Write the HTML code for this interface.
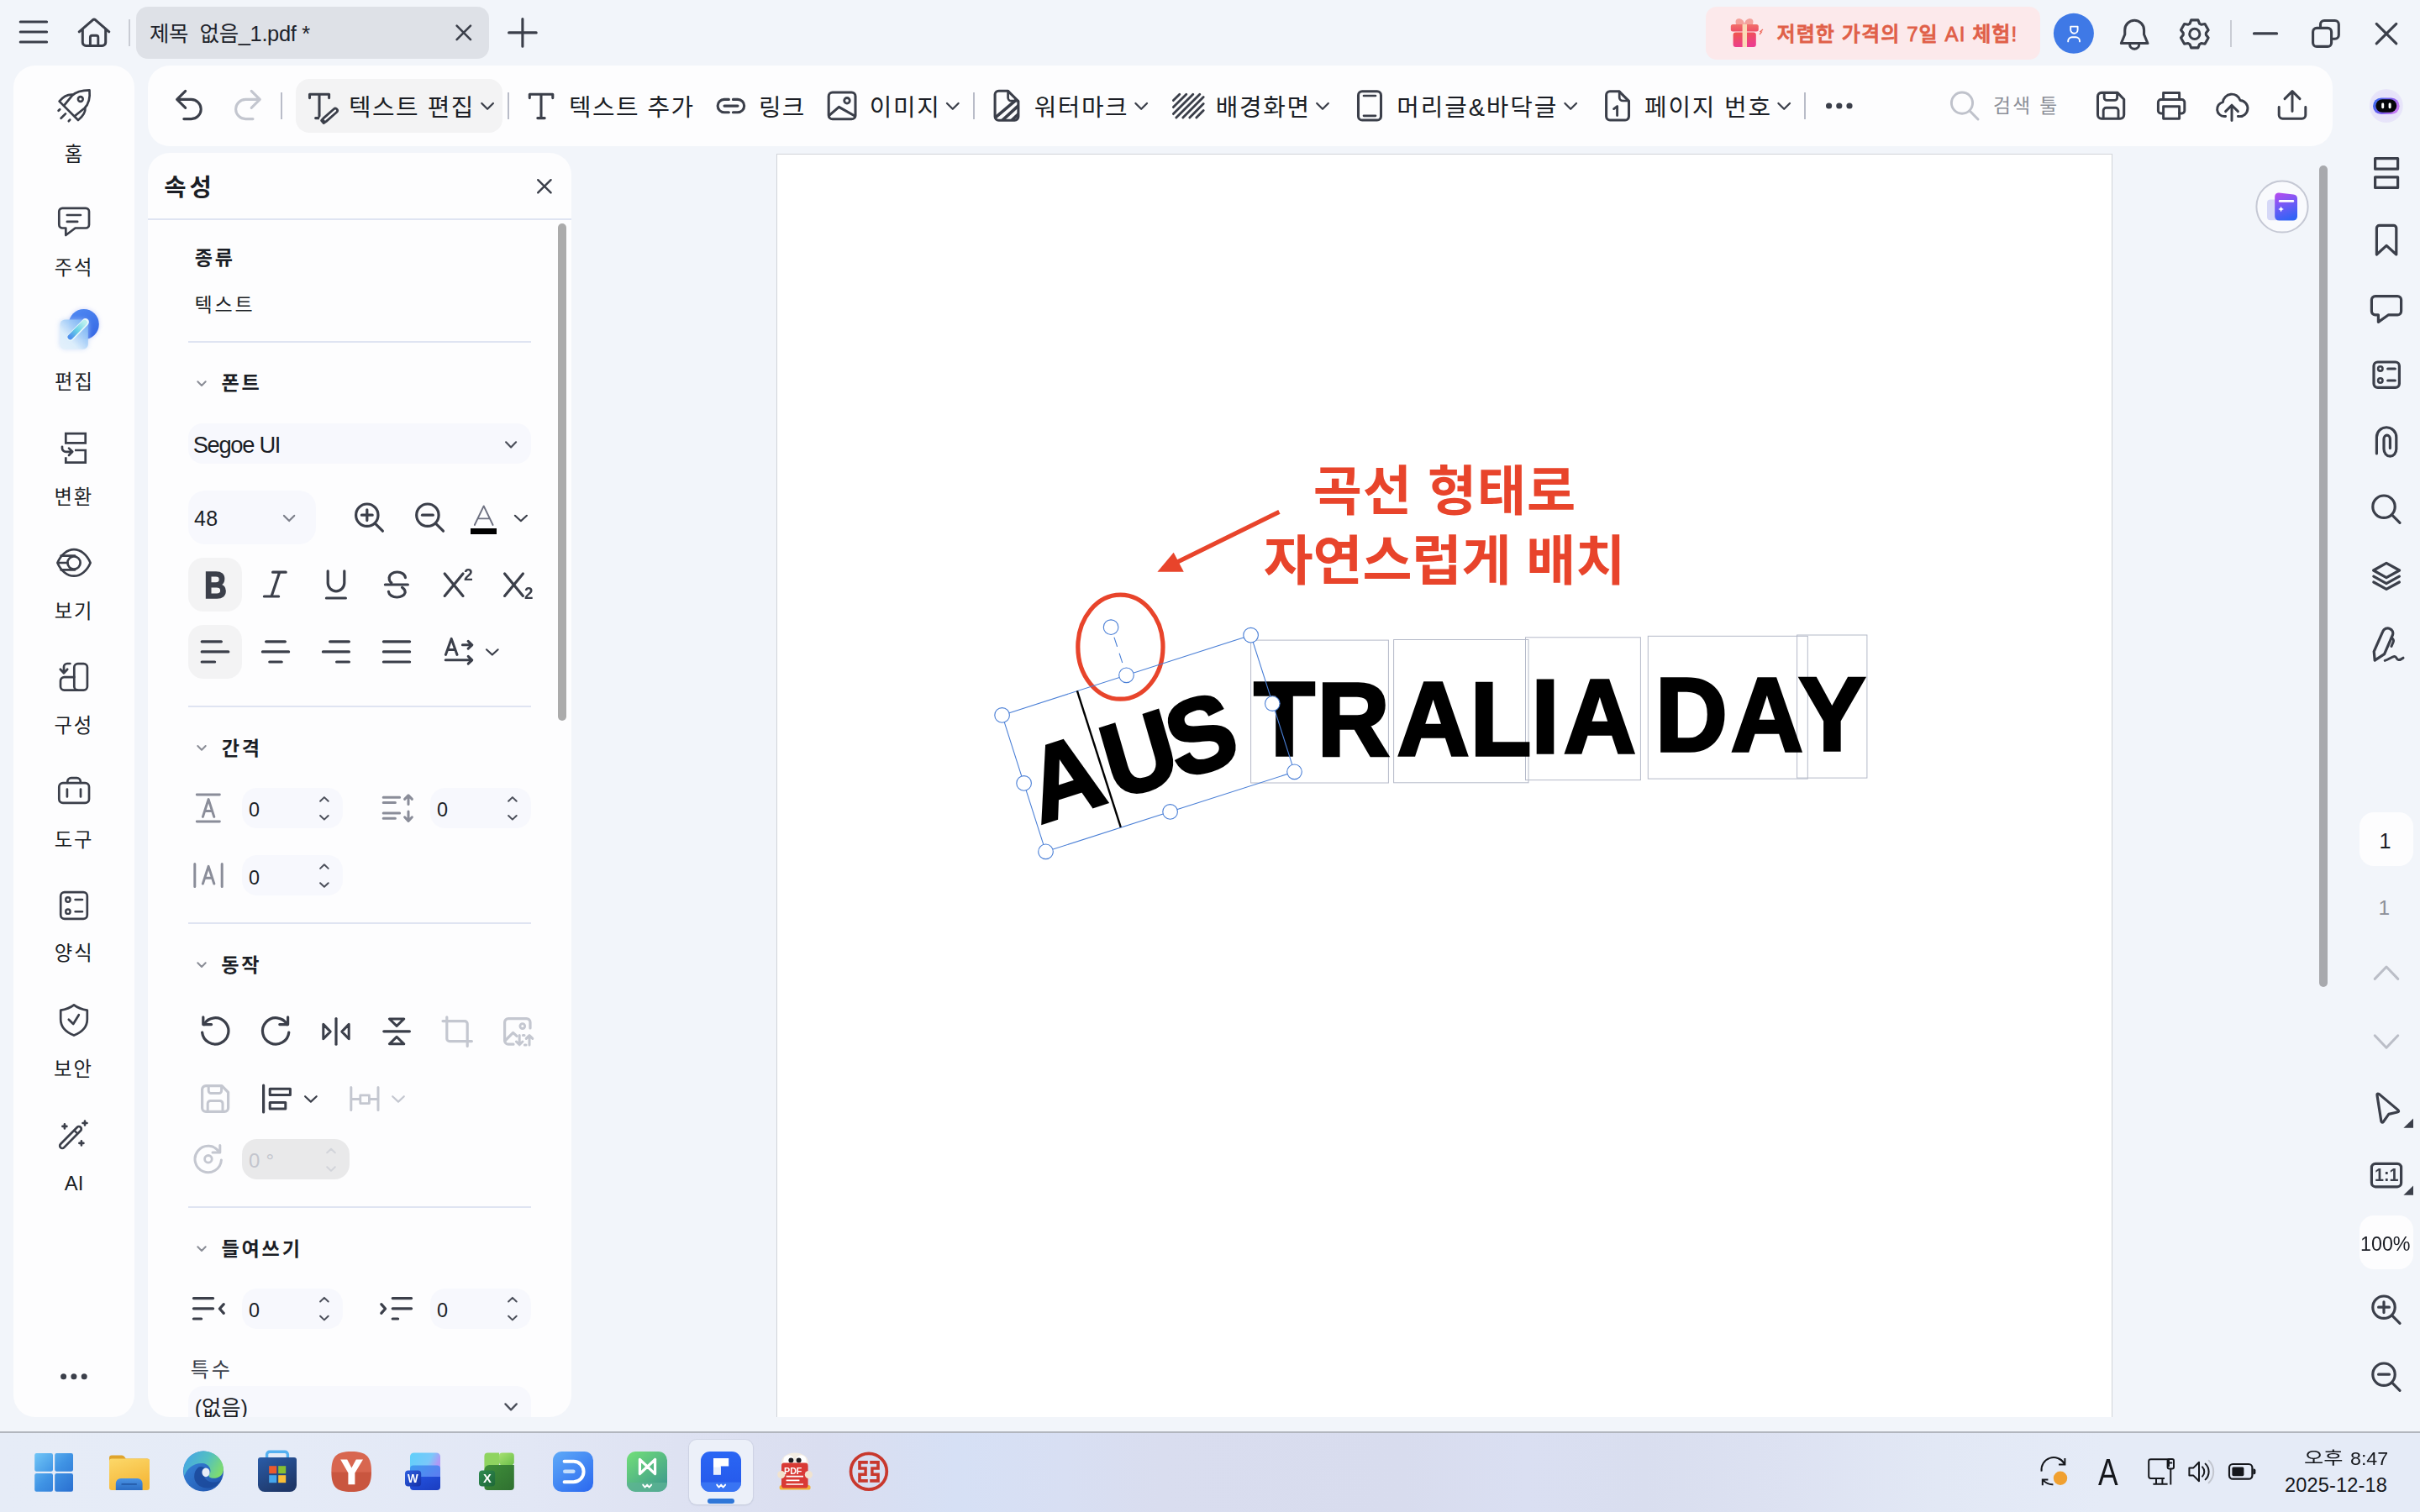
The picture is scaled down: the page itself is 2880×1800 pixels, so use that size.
<!DOCTYPE html>
<html lang="ko"><head><meta charset="utf-8"><title>제목 없음_1.pdf</title>
<style>
html,body{margin:0;padding:0;}
body{width:2880px;height:1800px;overflow:hidden;background:#f2f5fa;position:relative;font-family:"Liberation Sans","Noto Sans CJK KR",sans-serif;}
#ov,#ov2{position:absolute;left:0;top:0;width:2880px;height:1800px;pointer-events:none;}
</style></head><body>
<div style="position:absolute;left:924px;top:183px;width:1590px;height:1504px;background:#ffffff;border-radius:0px;box-sizing:border-box;border:1px solid #d1d4d9;border-bottom:none;"></div>
<div style="position:absolute;left:153.0px;top:23px;width:2.0px;height:32px;background:#c9ccd4;border-radius:0px;"></div>
<div style="position:absolute;left:162px;top:8px;width:420px;height:62px;background:#dee1e7;border-radius:14px;"></div>
<div style="position:absolute;left:2030px;top:8px;width:398px;height:63px;background:#fce9eb;border-radius:13px;"></div>
<div style="position:absolute;left:2654.0px;top:24px;width:2.0px;height:32px;background:#c9ccd4;border-radius:0px;"></div>
<div style="position:absolute;left:176px;top:78px;width:2600px;height:96px;background:#fdfdfe;border-radius:26px;"></div>
<div style="position:absolute;left:334.0px;top:110px;width:2.0px;height:32px;background:#b9bcc8;border-radius:0px;"></div>
<div style="position:absolute;left:352px;top:94px;width:246px;height:64px;background:#f3f3f4;border-radius:16px;"></div>
<div style="position:absolute;left:604.0px;top:110px;width:2.0px;height:32px;background:#b9bcc8;border-radius:0px;"></div>
<div style="position:absolute;left:1157.8px;top:110px;width:2.0px;height:32px;background:#b9bcc8;border-radius:0px;"></div>
<div style="position:absolute;left:2147.0px;top:110px;width:2.0px;height:32px;background:#b9bcc8;border-radius:0px;"></div>
<div style="position:absolute;left:16px;top:78px;width:144px;height:1609px;background:#fdfdfe;border-radius:26px;"></div>
<div style="position:absolute;left:176px;top:182px;width:504px;height:1505px;background:#fdfdfe;border-radius:26px;"></div>
<div style="position:absolute;left:176px;top:260px;width:504px;height:2px;background:#dfe4f2;border-radius:0px;"></div>
<div style="position:absolute;left:664px;top:266px;width:10.399999999999977px;height:591.6px;background:#ababab;border-radius:5.2px;"></div>
<div style="position:absolute;left:224px;top:405.8px;width:408px;height:2.0px;background:#dfe4f2;border-radius:0px;"></div>
<div style="position:absolute;left:224px;top:504px;width:408px;height:48px;background:#f7f8fd;border-radius:17px;"></div>
<div style="position:absolute;left:224px;top:584.2px;width:152px;height:63.799999999999955px;background:#f7f8fd;border-radius:20px;"></div>
<div style="position:absolute;left:560.4px;top:629px;width:30.200000000000045px;height:7.399999999999977px;background:#000;border-radius:0px;"></div>
<div style="position:absolute;left:224px;top:664.2px;width:64px;height:63.799999999999955px;background:#f3f3f4;border-radius:18px;"></div>
<div style="position:absolute;left:224px;top:744px;width:64px;height:63.60000000000002px;background:#f3f3f4;border-radius:18px;"></div>
<div style="position:absolute;left:224px;top:840px;width:408px;height:2px;background:#dfe4f2;border-radius:0px;"></div>
<div style="position:absolute;left:288px;top:938.2px;width:120px;height:47.799999999999955px;background:#f7f8fd;border-radius:18px;"></div>
<div style="position:absolute;left:512px;top:938.2px;width:120px;height:47.799999999999955px;background:#f7f8fd;border-radius:18px;"></div>
<div style="position:absolute;left:288px;top:1018.4px;width:120px;height:47.80000000000007px;background:#f7f8fd;border-radius:18px;"></div>
<div style="position:absolute;left:224px;top:1098.2px;width:408px;height:2.0px;background:#dfe4f2;border-radius:0px;"></div>
<div style="position:absolute;left:288px;top:1356.4px;width:128px;height:47.399999999999864px;background:#e9e9ea;border-radius:18px;"></div>
<div style="position:absolute;left:224px;top:1435.8px;width:408px;height:2.0px;background:#dfe4f2;border-radius:0px;"></div>
<div style="position:absolute;left:288px;top:1534.2px;width:120px;height:47.399999999999864px;background:#f7f8fd;border-radius:18px;"></div>
<div style="position:absolute;left:512px;top:1534.2px;width:120px;height:47.399999999999864px;background:#f7f8fd;border-radius:18px;"></div>
<div style="position:absolute;left:176px;top:1640px;width:504px;height:47px;overflow:hidden;border-radius:0 0 26px 26px"><div style="position:absolute;left:48px;top:10.2px;width:408px;height:60px;background:#f7f8fd;border-radius:18px"></div></div>
<div style="position:absolute;left:2760px;top:197px;width:10px;height:978.4000000000001px;background:#a8a9ad;border-radius:5px;"></div>
<div style="position:absolute;left:2808px;top:967px;width:64px;height:64px;background:#fdfdfe;border-radius:17px;"></div>
<div style="position:absolute;left:2808px;top:1447px;width:64px;height:64px;background:#fdfdfe;border-radius:17px;"></div>
<div style="position:absolute;left:0;top:1704px;width:2880px;height:96px;background:linear-gradient(90deg,#e6ecf7 0%,#e5ebf7 12%,#e2e7f5 22%,#dee2f2 28%,#dadef0 34%,#d6e0f5 39.5%,#d8dff3 44%,#d9ddef 48%,#d8dcee 58%,#dadff2 63%,#d9deef 68%,#dde2f2 74%,#e2e8f5 80%,#e5ebf7 87%,#e5ebf7 100%);border-top:2px solid #b2b6be;box-sizing:border-box"></div>
<div style="position:absolute;left:820px;top:1714px;width:76px;height:76.59999999999991px;background:#ecf0f9;border-radius:9px;box-shadow:0 0 0 1px rgba(200,205,222,0.55), 0 1px 2px rgba(120,130,160,0.25);"></div>
<div style="position:absolute;left:842.2px;top:1784px;width:31.799999999999955px;height:5.7999999999999545px;background:#2f77d8;border-radius:3px;"></div>
<svg id="ov" width="2880" height="1800" viewBox="0 0 2880 1800">
<rect x="1488.6" y="762.1" width="163.8" height="169.9" fill="none" stroke="#b4b9c8" stroke-width="1"/>
<rect x="1658.6" y="761.5" width="160.4" height="170.3" fill="none" stroke="#b4b9c8" stroke-width="1"/>
<rect x="1815.5" y="758.8" width="136.9" height="169.8" fill="none" stroke="#b4b9c8" stroke-width="1"/>
<rect x="1961.3" y="757.3" width="190.0" height="169.8" fill="none" stroke="#b4b9c8" stroke-width="1"/>
<rect x="2138.6" y="756" width="83.3" height="170.1" fill="none" stroke="#b4b9c8" stroke-width="1"/>
<path d="M1522.4,609.3 L1398,670.6" stroke="#e8442b" stroke-width="5.2" fill="none" stroke-linecap="butt" stroke-linejoin="round" />
<path d="M1377.4,680.8 L1396.7,657.7 L1408.8,680.8 Z" fill="#e8442b"/>
<text transform="scale(0.95,1)" x="1303.32 1396.59 1477.09 1570.74 1650.21 1750.32 1841.84 1918.37 1958.89 2047.92 2073.79 2168.42 2253.32" y="980.45 952.37 928.19 899.00 900.00 898.60 898.60 895.90 895.90 895.90 894.40 894.40 893.10" rotate="-16.99 -16.99 -16.99 0.00 0.00 0.00 0.00 0.00 0.00 0.00 0.00 0.00 0.00" font-family="Liberation Sans, sans-serif" font-weight="700" font-size="125.0" fill="#000" stroke="#000" stroke-width="3.7" stroke-linejoin="miter" stroke-miterlimit="2.5" xml:space="preserve">AUSTRALIA DAY</text>
<path d="M24.2,26 H55.6" stroke="#3b3f4a" stroke-width="3.05" fill="none" stroke-linecap="round" stroke-linejoin="round" />
<path d="M24.2,38 H55.6" stroke="#3b3f4a" stroke-width="3.05" fill="none" stroke-linecap="round" stroke-linejoin="round" />
<path d="M24.2,50 H55.6" stroke="#3b3f4a" stroke-width="3.05" fill="none" stroke-linecap="round" stroke-linejoin="round" />
<path d="M94.2,37.8 L110.6,23.6 Q112,22.6 113.4,23.6 L129.8,37.8" stroke="#3b3f4a" stroke-width="3.05" fill="none" stroke-linecap="round" stroke-linejoin="round" />
<path d="M98.3,35.4 V50.4 a4,4 0 0 0 4,4 H121.7 a4,4 0 0 0 4,-4 V35.4" stroke="#3b3f4a" stroke-width="3.05" fill="none" stroke-linecap="round" stroke-linejoin="round" />
<path d="M107.4,54 V44.4 a2.2,2.2 0 0 1 2.2,-2.2 H114.6 a2.2,2.2 0 0 1 2.2,2.2 V54" stroke="#3b3f4a" stroke-width="2.9" fill="none" stroke-linecap="round" stroke-linejoin="round" />
<path d="M543.6,30.7 L560,47.1 M560,30.7 L543.6,47.1" stroke="#3b3f4a" stroke-width="2.6" fill="none" stroke-linecap="round" stroke-linejoin="round" />
<path d="M605.6,38.9 H638.2 M621.9,22.6 V55.2" stroke="#3b3f4a" stroke-width="3.1" fill="none" stroke-linecap="round" stroke-linejoin="round" />
<defs><linearGradient id="gft" x1="0" y1="0" x2="0.3" y2="1"><stop offset="0" stop-color="#f0564a"/><stop offset="1" stop-color="#ec3d8e"/></linearGradient>
    <linearGradient id="gft2" x1="0" y1="0" x2="0" y2="1"><stop offset="0" stop-color="#f2706a"/><stop offset="1" stop-color="#ee4f66"/></linearGradient></defs>
    <path d="M2066,29 q-2,-7 4,-7 q6,1 6,8 q0,-7 6,-8 q6,0 4,7 z" fill="#f3a29c"/>
    <rect x="2059.8" y="29" width="33" height="8.5" rx="2.5" fill="url(#gft2)"/>
    <rect x="2062.6" y="38.6" width="27.2" height="17.4" rx="3" fill="url(#gft)"/>
    <rect x="2073.6" y="29" width="5.4" height="27" fill="#fbd9b6"/>
    <path d="M2094,41 l2.5,-3 l-1.5,-0.5 l3,-2.5" stroke="#ee6a5c" stroke-width="1.2" fill="none"/>
<circle cx="2467.9" cy="39.8" r="24" fill="#3f79e6"/>
<path d="M2464.2,31.6 H2472.6 V35.4 a4.3,4.3 0 0 1 -4.3,4.3 a4.1,4.1 0 0 1 -4.1,-4.3 Z" stroke="#fff" stroke-width="1.9" fill="none" stroke-linejoin="round"/>
<path d="M2461.2,49.4 V48.8 a4.6,4.6 0 0 1 4.6,-4.6 H2470.4 a4.6,4.6 0 0 1 4.6,4.6 V49.4" stroke="#fff" stroke-width="1.9" fill="none" stroke-linecap="round"/>
<path d="M2524.4,51.5 L2528.75,41 V35.7 a11.4,11.4 0 0 1 22.8,0 V41 L2555.9,51.5 Z" stroke="#3b3f4a" stroke-width="3.1" fill="none" stroke-linecap="round" stroke-linejoin="round" />
<path d="M2534.6,53 a5.55,5.2 0 0 0 11.1,0" stroke="#3b3f4a" stroke-width="3.0" fill="none" stroke-linecap="round" stroke-linejoin="round" />
<path d="M2606.05,28.07 L2607.69,23.90 L2615.91,23.90 L2617.55,28.07 L2619.60,29.26 L2624.03,28.59 L2628.14,35.71 L2625.35,39.21 L2625.35,41.59 L2628.14,45.09 L2624.03,52.21 L2619.60,51.54 L2617.55,52.73 L2615.91,56.90 L2607.69,56.90 L2606.05,52.73 L2604.00,51.54 L2599.57,52.21 L2595.46,45.09 L2598.25,41.59 L2598.25,39.21 L2595.46,35.71 L2599.57,28.59 L2604.00,29.26 Z" stroke="#3b3f4a" stroke-width="3.1" fill="none" stroke-linecap="round" stroke-linejoin="round" />
<circle cx="2611.8" cy="40.4" r="6.1" stroke="#3b3f4a" stroke-width="3" fill="none"/>
<path d="M2682.4,39.9 H2709.6" stroke="#3b3f4a" stroke-width="3.1" fill="none" stroke-linecap="round" stroke-linejoin="round" />
<path d="M2761.5,31.4 V29 a4.5,4.5 0 0 1 4.5,-4.5 H2778.8 a4.5,4.5 0 0 1 4.5,4.5 V41.8 a4.5,4.5 0 0 1 -4.5,4.5 H2776.6" stroke="#3b3f4a" stroke-width="3.1" fill="none" stroke-linecap="round" stroke-linejoin="round" />
<rect x="2752.6" y="33.4" width="22" height="22" rx="4.5" stroke="#3b3f4a" stroke-width="3.1" fill="none"/>
<path d="M2828.2,28.4 L2851.8,51.8 M2851.8,28.4 L2828.2,51.8" stroke="#3b3f4a" stroke-width="3.1" fill="none" stroke-linecap="round" stroke-linejoin="round" />
<path d="M220.7,108.4 L210.6,118.4 L220.7,128.4 M211.4,118.4 H227.6 a11.6,11.6 0 0 1 0,23.2 H218.8" stroke="#3b3f4a" stroke-width="3.06" fill="none" stroke-linecap="round" stroke-linejoin="round" />
<path d="M299.2,108.4 L309.3,118.4 L299.2,128.4 M308.5,118.4 H292.2 a11.6,11.6 0 0 0 0,23.2 H301" stroke="#c3c6cf" stroke-width="3.06" fill="none" stroke-linecap="round" stroke-linejoin="round" />
<path d="M368.5,116.6 V112.2 H391.6 V116.6 M380,112.2 V140.4 M375.6,140.6 H381" stroke="#3b3f4a" stroke-width="3.06" fill="none" stroke-linecap="round" stroke-linejoin="round" />
<g transform="translate(392.6,137.3) rotate(-41.5)"><path d="M-9.6,-2.5 H8.6 a2.5,2.5 0 0 1 0,5 H-9.6 L-12.4,0 Z" fill="#f3f3f4" stroke="#f3f3f4" stroke-width="7.6" stroke-linejoin="round"/><path d="M-8.2,-2.5 H8.6 a2.5,2.5 0 0 1 0,5 H-8.2 L-11.6,2 V-2 Z" fill="#fdfdfe" stroke="#3b3f4a" stroke-width="2.8" stroke-linejoin="round"/><path d="M-11.6,-2 L-8.6,-2.5 V2.5 L-11.6,2 Z" fill="#3b3f4a"/></g>
<path d="M573.3000000000001,123.0 L580.1,129.8 L586.9,123.0" stroke="#3b3f4a" stroke-width="2.3" fill="none" stroke-linecap="round" stroke-linejoin="round" />
<path d="M630.3,116.6 V112.2 H657.8 V116.6 M644,112.2 V140.4 M639.8,140.6 H648.2" stroke="#3b3f4a" stroke-width="3.06" fill="none" stroke-linecap="round" stroke-linejoin="round" />
<path d="M867.4,118.4 H861.8 a7.7,7.7 0 0 0 0,15.4 H867.4 M872.4,118.4 H878 a7.7,7.7 0 0 1 0,15.4 H872.4 M862,126.1 H878" stroke="#3b3f4a" stroke-width="3.06" fill="none" stroke-linecap="round" stroke-linejoin="round" />
<rect x="986.2" y="110" width="31.8" height="31.8" rx="4.6" stroke="#3b3f4a" stroke-width="3.05" fill="none"/>
<circle cx="1008" cy="119.8" r="3.3" stroke="#3b3f4a" stroke-width="2.8" fill="none"/>
<path d="M986.6,137.6 L998.4,127.4 L1017.6,138.2" stroke="#3b3f4a" stroke-width="3.06" fill="none" stroke-linecap="round" stroke-linejoin="round" />
<path d="M1127.0,123.0 L1133.8,129.8 L1140.6,123.0" stroke="#3b3f4a" stroke-width="2.3" fill="none" stroke-linecap="round" stroke-linejoin="round" />
<clipPath id="wmc"><path d="M1184.1,112.6 a4.4,4.4 0 0 1 4.4,-4.4 H1199.4 L1211.9,120.6 V138.8 a4.4,4.4 0 0 1 -4.4,4.4 H1188.5 a4.4,4.4 0 0 1 -4.4,-4.4 Z"/></clipPath>
    <g clip-path="url(#wmc)" stroke="#3b3f4a" stroke-width="3.7" fill="none" stroke-linecap="butt">
      <path d="M1181.4,142.6 L1209.4,118.8 M1188.6,147.2 L1214.5,123.4 M1199.4,147.6 L1214.5,133.4"/>
    </g>
<path d="M1184.1,112.6 a4.4,4.4 0 0 1 4.4,-4.4 H1199.4 L1211.9,120.6 V138.8 a4.4,4.4 0 0 1 -4.4,4.4 H1188.5 a4.4,4.4 0 0 1 -4.4,-4.4 Z" stroke="#3b3f4a" stroke-width="3.06" fill="none" stroke-linecap="round" stroke-linejoin="round" />
<path d="M1199.6,108.6 V116.2 a4,4 0 0 0 4,4 H1211.4" stroke="#3b3f4a" stroke-width="2.7" fill="none" stroke-linecap="round" stroke-linejoin="round" />
<path d="M1351.4,123.0 L1358.2,129.8 L1365.0,123.0" stroke="#3b3f4a" stroke-width="2.3" fill="none" stroke-linecap="round" stroke-linejoin="round" />
<path d="M1396.4,119.6 L1403.8,112.2 M1396.4,127.6 L1411.8,112.2 M1396.4,135.6 L1419.8,112.2 M1399.8,140.0 L1427.8,112.2 M1407.8,140.0 L1432.2,115.6 M1415.8,140.0 L1432.2,123.6 M1423.8,140.0 L1432.2,131.6" stroke="#3b3f4a" stroke-width="2.88" fill="none" stroke-linecap="round" stroke-linejoin="round" />
<path d="M1567.2,123.0 L1574,129.8 L1580.8,123.0" stroke="#3b3f4a" stroke-width="2.3" fill="none" stroke-linecap="round" stroke-linejoin="round" />
<rect x="1616.5" y="108.8" width="27" height="34.2" rx="4.6" stroke="#3b3f4a" stroke-width="3.05" fill="none"/>
<path d="M1623,114 H1637 M1623,137.8 H1637" stroke="#3b3f4a" stroke-width="2.7" fill="none" stroke-linecap="round" stroke-linejoin="round" />
<path d="M1862.4,123.0 L1869.2,129.8 L1876.0,123.0" stroke="#3b3f4a" stroke-width="2.3" fill="none" stroke-linecap="round" stroke-linejoin="round" />
<path d="M1911.6,113.2 a4.4,4.4 0 0 1 4.4,-4.4 H1927 L1938.5,120.4 V138.6 a4.4,4.4 0 0 1 -4.4,4.4 H1916 a4.4,4.4 0 0 1 -4.4,-4.4 Z" stroke="#3b3f4a" stroke-width="3.06" fill="none" stroke-linecap="round" stroke-linejoin="round" />
<path d="M1927.2,109.2 V116 a4,4 0 0 0 4,4 H1938" stroke="#3b3f4a" stroke-width="2.7" fill="none" stroke-linecap="round" stroke-linejoin="round" />
<path d="M1920.6,129.6 L1924.6,126.6 V137.6" stroke="#3b3f4a" stroke-width="2.88" fill="none" stroke-linecap="round" stroke-linejoin="round" />
<path d="M2116.3999999999996,123.0 L2123.2,129.8 L2130.0,123.0" stroke="#3b3f4a" stroke-width="2.3" fill="none" stroke-linecap="round" stroke-linejoin="round" />
<circle cx="2176.6" cy="126" r="3.6" fill="#3b3f4a"/>
<circle cx="2188.8" cy="126" r="3.6" fill="#3b3f4a"/>
<circle cx="2201" cy="126" r="3.6" fill="#3b3f4a"/>
<circle cx="2335" cy="122.6" r="12.6" stroke="#bfc2cb" stroke-width="2.9" fill="none"/>
<path d="M2344.4,132.2 L2354,142" stroke="#bfc2cb" stroke-width="3.06" fill="none" stroke-linecap="round" stroke-linejoin="round" />
<path d="M2496.5,114.8 a4.4,4.4 0 0 1 4.4,-4.4 H2520 L2527.7,118.2 V136.8 a4.4,4.4 0 0 1 -4.4,4.4 H2500.9 a4.4,4.4 0 0 1 -4.4,-4.4 Z" stroke="#3b3f4a" stroke-width="3.06" fill="none" stroke-linecap="round" stroke-linejoin="round" />
<path d="M2504.2,111 V116.4 a3,3 0 0 0 3,3 H2516.6 a3,3 0 0 0 3,-3 V111" stroke="#3b3f4a" stroke-width="2.88" fill="none" stroke-linecap="round" stroke-linejoin="round" />
<path d="M2503.2,140.8 V131.6 a3.4,3.4 0 0 1 3.4,-3.4 H2517.6 a3.4,3.4 0 0 1 3.4,3.4 V140.8" stroke="#3b3f4a" stroke-width="2.88" fill="none" stroke-linecap="round" stroke-linejoin="round" />
<path d="M2574.6,118.6 V110.4 H2593.6 V118.6" stroke="#3b3f4a" stroke-width="2.97" fill="none" stroke-linecap="round" stroke-linejoin="round" />
<path d="M2574.6,135 H2571.6 a3.2,3.2 0 0 1 -3.2,-3.2 V121.8 a3.2,3.2 0 0 1 3.2,-3.2 H2596.6 a3.2,3.2 0 0 1 3.2,3.2 V131.8 a3.2,3.2 0 0 1 -3.2,3.2 H2593.6" stroke="#3b3f4a" stroke-width="2.97" fill="none" stroke-linecap="round" stroke-linejoin="round" />
<path d="M2574.6,126.8 H2593.6 V141.2 H2574.6 Z" stroke="#3b3f4a" stroke-width="2.97" fill="none" stroke-linecap="round" stroke-linejoin="round" />
<path d="M2648.6,138.6 H2647 a8.6,8.6 0 0 1 -1.6,-17 a10.6,10.6 0 0 1 20.6,-2.2 a9.6,9.6 0 0 1 -1.4,19.2 H2663.4" stroke="#3b3f4a" stroke-width="2.97" fill="none" stroke-linecap="round" stroke-linejoin="round" />
<path d="M2656,143.6 V126.6 M2648.6,132.6 L2656,125.2 L2663.4,132.6" stroke="#3b3f4a" stroke-width="2.97" fill="none" stroke-linecap="round" stroke-linejoin="round" />
<path d="M2712.2,127.4 V137 a4.2,4.2 0 0 0 4.2,4.2 H2739.6 a4.2,4.2 0 0 0 4.2,-4.2 V127.4" stroke="#3b3f4a" stroke-width="2.97" fill="none" stroke-linecap="round" stroke-linejoin="round" />
<path d="M2728,132.4 V109.4 M2719,117.6 L2728,108.6 L2737,117.6" stroke="#3b3f4a" stroke-width="2.97" fill="none" stroke-linecap="round" stroke-linejoin="round" />
<path d="M76.4,125.4 L85.8,113.8 C90,109.6 97,107.5 106.5,107.4 C107.4,116.6 105.6,124 100.6,128.8 L89.4,137.8" stroke="#3b3f4a" stroke-width="2.7" fill="none" stroke-linecap="round" stroke-linejoin="round" />
<path d="M86.4,112.7 C80,112.2 75,115.4 70.6,120.6 L93,143 C98.4,138.6 102,134.4 101.4,128.4" stroke="#3b3f4a" stroke-width="2.7" fill="none" stroke-linecap="round" stroke-linejoin="round" />
<circle cx="95.8" cy="118" r="2.9" stroke="#3b3f4a" stroke-width="2.6" fill="none"/>
<path d="M69.6,131.8 L71.2,130.2 M72.6,140.8 L78,135.4 M81.8,144.2 L83.2,142.6" stroke="#3b3f4a" stroke-width="2.7" fill="none" stroke-linecap="round" stroke-linejoin="round" />
<path d="M78.3,280 V271.5 H74.2 a3.9,3.9 0 0 1 -3.9,-3.9 V251.8 a3.9,3.9 0 0 1 3.9,-3.9 H102.1 a3.9,3.9 0 0 1 3.9,3.9 V267.6 a3.9,3.9 0 0 1 -3.9,3.9 H89.6 Z" stroke="#3b3f4a" stroke-width="2.7" fill="none" stroke-linecap="round" stroke-linejoin="round" />
<path d="M79.8,256 H96 M79.8,263.9 H92.2" stroke="#3b3f4a" stroke-width="2.6" fill="none" stroke-linecap="round" stroke-linejoin="round" />
<defs>
    <linearGradient id="edc" x1="0.2" y1="0" x2="0.8" y2="1"><stop offset="0" stop-color="#4f88f2"/><stop offset="1" stop-color="#3668e4"/></linearGradient>
    <linearGradient id="edg" x1="1" y1="0" x2="0.1" y2="0.9"><stop offset="0" stop-color="#6aa9f4" stop-opacity="0.96"/><stop offset="0.45" stop-color="#a9d0f8" stop-opacity="0.97"/><stop offset="0.75" stop-color="#dcedfb" stop-opacity="0.98"/><stop offset="1" stop-color="#e2f0fb" stop-opacity="0.98"/></linearGradient>
    <linearGradient id="edp" x1="0" y1="1" x2="1" y2="0"><stop offset="0" stop-color="#4f92ee"/><stop offset="0.45" stop-color="#66cfe6"/><stop offset="1" stop-color="#b9f0ee"/></linearGradient>
    <filter id="edb" x="-40%" y="-40%" width="180%" height="180%"><feGaussianBlur stdDeviation="2.4"/></filter>
    <filter id="edb2" x="-40%" y="-40%" width="180%" height="180%"><feGaussianBlur stdDeviation="0.7"/></filter>
    </defs>
    <circle cx="99.8" cy="386" r="18.6" fill="#8f9cf4" opacity="0.35" filter="url(#edb)"/>
    <circle cx="99.8" cy="386" r="18" fill="url(#edc)"/>
    <rect x="70" y="379.4" width="36" height="37" rx="7" fill="#b9d2f6" opacity="0.5" filter="url(#edb)"/>
    <rect x="71.4" y="380.4" width="33.4" height="35.4" rx="6" fill="url(#edg)" filter="url(#edb2)"/>
    <path d="M84,401.6 L101.6,383.4" stroke="#eaf8fc" stroke-width="8.6" stroke-linecap="round" fill="none" filter="url(#edb2)"/>
    <path d="M83.6,401.2 L100.6,384" stroke="url(#edp)" stroke-width="6.2" stroke-linecap="round" fill="none" filter="url(#edb2)"/>
<path d="M78.3,516.1 H101.7 V527.4 H78.3 Z" stroke="#3b3f4a" stroke-width="2.7" fill="none" stroke-linecap="round" stroke-linejoin="miter" />
<path d="M90.4,536 H101.7 V550.7 H78.3 V545.6" stroke="#3b3f4a" stroke-width="2.7" fill="none" stroke-linecap="square" stroke-linejoin="miter" />
<path d="M74,531.8 V533.4 a4.4,4.4 0 0 0 4.4,4.4 H85.6 M82,533.6 L86.2,537.8 L82,542" stroke="#3b3f4a" stroke-width="2.7" fill="none" stroke-linecap="round" stroke-linejoin="round" />
<path d="M68.4,670 C72.4,660.4 80,654.1 88,654.1 C96,654.1 103.6,660.4 107.6,670 C103.6,679.6 96,685.7 88,685.7 C80,685.7 72.4,679.6 68.4,670 Z" stroke="#3b3f4a" stroke-width="2.7" fill="none" stroke-linecap="round" stroke-linejoin="round" />
<circle cx="88" cy="670" r="7.6" stroke="#3b3f4a" stroke-width="2.7" fill="none"/>
<path d="M72.6,661.6 H89 M69.4,670 H80.4 M72.6,678.4 H89" stroke="#3b3f4a" stroke-width="2.7" fill="none" stroke-linecap="round" stroke-linejoin="round" />
<rect x="88.3" y="790.1" width="15.6" height="31.5" rx="4.4" stroke="#3b3f4a" stroke-width="2.7" fill="none"/>
<path d="M88.3,806.1 H76.4 a4.4,4.4 0 0 0 -4.4,4.4 V817.2 a4.4,4.4 0 0 0 4.4,4.4 H92" stroke="#3b3f4a" stroke-width="2.7" fill="none" stroke-linecap="round" stroke-linejoin="round" />
<path d="M83.4,790 H80 a4,4 0 0 0 -4,4 V800.8 M71.8,796.8 L76,801.2 L80.2,796.8" stroke="#3b3f4a" stroke-width="2.7" fill="none" stroke-linecap="round" stroke-linejoin="round" />
<rect x="70.3" y="932.2" width="35.7" height="23.6" rx="4.6" stroke="#3b3f4a" stroke-width="2.7" fill="none"/>
<path d="M80.3,932 V930.6 a4.4,4.4 0 0 1 4.4,-4.4 H91.4 a4.4,4.4 0 0 1 4.4,4.4 V932" stroke="#3b3f4a" stroke-width="2.7" fill="none" stroke-linecap="round" stroke-linejoin="round" />
<path d="M79.9,939.6 V948.4 M96,939.6 V948.4" stroke="#3b3f4a" stroke-width="2.7" fill="none" stroke-linecap="round" stroke-linejoin="round" />
<rect x="72.2" y="1062.2" width="31.6" height="31.6" rx="4.6" stroke="#3b3f4a" stroke-width="2.7" fill="none"/>
<circle cx="80.9" cy="1071" r="2.7" stroke="#3b3f4a" stroke-width="2.4" fill="none"/><circle cx="80.9" cy="1085.2" r="2.7" stroke="#3b3f4a" stroke-width="2.4" fill="none"/>
<path d="M89.6,1071 H98 M89.6,1085.2 H98" stroke="#3b3f4a" stroke-width="2.6" fill="none" stroke-linecap="round" stroke-linejoin="round" />
<path d="M88,1196.4 C92.4,1199.8 97.6,1201.8 103.8,1202.6 V1213.6 C103.8,1222.6 97.6,1228.8 88,1232.6 C78.4,1228.8 72.2,1222.6 72.2,1213.6 V1202.6 C78.4,1201.8 83.6,1199.8 88,1196.4 Z" stroke="#3b3f4a" stroke-width="2.7" fill="none" stroke-linecap="round" stroke-linejoin="round" />
<path d="M81.8,1213.8 L87.2,1219 L93.8,1208.2" stroke="#3b3f4a" stroke-width="2.7" fill="none" stroke-linecap="round" stroke-linejoin="round" />
<g transform="translate(84,1354.05) rotate(-45.4)"><rect x="-17" y="-2.9" width="34" height="5.8" rx="2.9" stroke="#3b3f4a" stroke-width="2.7" fill="none"/><path d="M9,-2.9 V2.9" stroke="#3b3f4a" stroke-width="2.4"/></g>
<path d="M74.4,1340.9 H79.4 M76.9,1338.4 V1343.4 M98.5,1337 H103.5 M101,1334.5 V1339.5 M94.4,1360.9 H99.4 M96.9,1358.4 V1363.4" stroke="#3b3f4a" stroke-width="2.6" fill="none" stroke-linecap="round" stroke-linejoin="round" />
<circle cx="75.6" cy="1638.7" r="3.5" fill="#3b3f4a"/>
<circle cx="87.9" cy="1638.7" r="3.5" fill="#3b3f4a"/>
<circle cx="100.2" cy="1638.7" r="3.5" fill="#3b3f4a"/>
<path d="M640.2,214.2 L655.6,229.4 M655.6,214.2 L640.2,229.4" stroke="#3b3f4a" stroke-width="2.4" fill="none" stroke-linecap="round" stroke-linejoin="round" />
<path d="M235.3,454.20000000000005 L240,459.0 L244.7,454.20000000000005" stroke="#8a8d96" stroke-width="2.0" fill="none" stroke-linecap="round" stroke-linejoin="round" />
<path d="M602.1,526.3 L608.1,532.5 L614.1,526.3" stroke="#4b4f5a" stroke-width="2.2" fill="none" stroke-linecap="round" stroke-linejoin="round" />
<path d="M338.0,613.9 L344.1,620.1 L350.20000000000005,613.9" stroke="#7c7f8a" stroke-width="2.2" fill="none" stroke-linecap="round" stroke-linejoin="round" />
<circle cx="436.8" cy="613.2" r="13.2" stroke="#3b3f4a" stroke-width="3.2" fill="none"/>
<path d="M446.6,623.4 L455.40000000000003,632.2" stroke="#3b3f4a" stroke-width="3.2" fill="none" stroke-linecap="round" stroke-linejoin="round" />
<path d="M430.40000000000003,613.2 H443.2 M436.8,606.8 V619.6" stroke="#3b3f4a" stroke-width="3.2" fill="none" stroke-linecap="round" stroke-linejoin="round" />
<circle cx="508.9" cy="613.2" r="13.2" stroke="#3b3f4a" stroke-width="3.2" fill="none"/>
<path d="M518.6999999999999,623.4 L527.5,632.2" stroke="#3b3f4a" stroke-width="3.2" fill="none" stroke-linecap="round" stroke-linejoin="round" />
<path d="M502.5,613.2 H515.3" stroke="#3b3f4a" stroke-width="3.2" fill="none" stroke-linecap="round" stroke-linejoin="round" />
<path d="M564.8,625 L575.7,602.4 L586.6,625 M568.6,617.4 H582.8" stroke="#6d7080" stroke-width="1.9" fill="none" stroke-linecap="round" stroke-linejoin="round" />
<path d="M612.9,613.8 L619.9,620.2 L626.9,613.8" stroke="#3b3f4a" stroke-width="2.2" fill="none" stroke-linecap="round" stroke-linejoin="round" />
<path d="M324.6,681.2 H340.2 M314.4,710 H331.6 M332.6,681.6 L323.2,709.6" stroke="#3b3f4a" stroke-width="3.2" fill="none" stroke-linecap="round" stroke-linejoin="round" />
<path d="M390.2,679.8 V694 a9.8,9.8 0 0 0 19.6,0 V679.8 M388.4,712 H411.4" stroke="#3b3f4a" stroke-width="3.2" fill="none" stroke-linecap="round" stroke-linejoin="round" />
<path d="M482.4,687.6 a9.6,7 0 0 0 -9.8,-6.6 a9.4,7.2 0 0 0 -9.4,7 a7.6,7 0 0 0 2.6,5.8 M458.4,696 H485.4 M478.6,699.4 a8,7.4 0 0 1 3.6,6 a9.8,6.8 0 0 1 -9.8,5.6 a10,7.2 0 0 1 -10,-6.6" stroke="#3b3f4a" stroke-width="3.2" fill="none" stroke-linecap="round" stroke-linejoin="round" />
<path d="M529.2,683 L551,709.4 M551,683 L529.2,709.4" stroke="#3b3f4a" stroke-width="3.2" fill="none" stroke-linecap="round" stroke-linejoin="round" />
<path d="M600.6,683 L622.4,709.4 M622.4,683 L600.6,709.4" stroke="#3b3f4a" stroke-width="3.2" fill="none" stroke-linecap="round" stroke-linejoin="round" />
<path d="M240.2,763.8 H263.4 M240.2,775.9 H271.8 M240.2,788 H255.6" stroke="#3b3f4a" stroke-width="3.2" fill="none" stroke-linecap="round" stroke-linejoin="round" />
<path d="M316.6,763.8 H339.4 M312.4,775.9 H343.6 M320.8,788 H335.2" stroke="#3b3f4a" stroke-width="3.2" fill="none" stroke-linecap="round" stroke-linejoin="round" />
<path d="M392.6,763.8 H415.4 M384.4,775.9 H415.4 M400.6,788 H415.4" stroke="#3b3f4a" stroke-width="3.2" fill="none" stroke-linecap="round" stroke-linejoin="round" />
<path d="M456.4,763.8 H487.6 M456.4,775.9 H487.6 M456.4,788 H487.6" stroke="#3b3f4a" stroke-width="3.2" fill="none" stroke-linecap="round" stroke-linejoin="round" />
<path d="M530.4,779.4 L537.2,760.4 L544,779.4 M532.8,773.4 H541.6" stroke="#3b3f4a" stroke-width="3.0" fill="none" stroke-linecap="round" stroke-linejoin="round" />
<path d="M550.4,767.8 H561.6 M557.2,763.4 L561.8,767.8 L557.2,772.2" stroke="#3b3f4a" stroke-width="3.0" fill="none" stroke-linecap="round" stroke-linejoin="round" />
<path d="M530.2,785.8 H561.6 M557.2,781.4 L561.8,785.8 L557.2,790.2" stroke="#3b3f4a" stroke-width="3.0" fill="none" stroke-linecap="round" stroke-linejoin="round" />
<path d="M579.0,773.3 L585.8,779.5 L592.5999999999999,773.3" stroke="#3b3f4a" stroke-width="2.2" fill="none" stroke-linecap="round" stroke-linejoin="round" />
<path d="M235.3,888.0 L240,892.8 L244.7,888.0" stroke="#8a8d96" stroke-width="2.0" fill="none" stroke-linecap="round" stroke-linejoin="round" />
<path d="M234.2,946 H261.4 M234.2,978 H261.4" stroke="#8a8d99" stroke-width="2.8" fill="none" stroke-linecap="round" stroke-linejoin="round" />
<path d="M241.4,972.4 L248.1,951.6 L254.8,972.4 M243.8,965.6 H252.4" stroke="#8a8d99" stroke-width="3.0" fill="none" stroke-linecap="round" stroke-linejoin="round" />
<path d="M381.09999999999997,953.6999999999999 L385.9,949.1 L390.7,953.6999999999999" stroke="#4b4f5a" stroke-width="2.0" fill="none" stroke-linecap="round" stroke-linejoin="round" />
<path d="M381.09999999999997,971.0000000000001 L385.9,975.6 L390.7,971.0000000000001" stroke="#4b4f5a" stroke-width="2.0" fill="none" stroke-linecap="round" stroke-linejoin="round" />
<path d="M456.2,949.2 H475.6 M456.2,955.6 H470.4 M456.2,968 H475.6 M456.2,974.2 H470.4" stroke="#8a8d99" stroke-width="3.0" fill="none" stroke-linecap="round" stroke-linejoin="round" />
<path d="M486,947.2 V957.6 M481.6,951.4 L486,946.8 L490.4,951.4 M486,966 V977 M481.6,972.8 L486,977.4 L490.4,972.8" stroke="#8a8d99" stroke-width="3.0" fill="none" stroke-linecap="round" stroke-linejoin="round" />
<path d="M605.1,953.6999999999999 L609.9,949.1 L614.6999999999999,953.6999999999999" stroke="#4b4f5a" stroke-width="2.0" fill="none" stroke-linecap="round" stroke-linejoin="round" />
<path d="M605.1,971.0000000000001 L609.9,975.6 L614.6999999999999,971.0000000000001" stroke="#4b4f5a" stroke-width="2.0" fill="none" stroke-linecap="round" stroke-linejoin="round" />
<path d="M231.8,1028.4 V1055.6 M264.2,1028.4 V1055.6" stroke="#8a8d99" stroke-width="3.0" fill="none" stroke-linecap="round" stroke-linejoin="round" />
<path d="M241.4,1052 L248.1,1031.4 L254.8,1052 M243.8,1045.2 H252.4" stroke="#8a8d99" stroke-width="3.0" fill="none" stroke-linecap="round" stroke-linejoin="round" />
<path d="M381.09999999999997,1033.8999999999999 L385.9,1029.3 L390.7,1033.8999999999999" stroke="#4b4f5a" stroke-width="2.0" fill="none" stroke-linecap="round" stroke-linejoin="round" />
<path d="M381.09999999999997,1051.2 L385.9,1055.8 L390.7,1051.2" stroke="#4b4f5a" stroke-width="2.0" fill="none" stroke-linecap="round" stroke-linejoin="round" />
<path d="M235.3,1146.1999999999998 L240,1151.0 L244.7,1146.1999999999998" stroke="#8a8d96" stroke-width="2.0" fill="none" stroke-linecap="round" stroke-linejoin="round" />
<path d="M241.8,1210.8 V1219.6 H251.6" stroke="#3b3f4a" stroke-width="3.2" fill="none" stroke-linecap="round" stroke-linejoin="round" />
<path d="M242.6,1219.6 A15.7,15.7 0 1 1 240.6,1229" stroke="#3b3f4a" stroke-width="3.2" fill="none" stroke-linecap="round" stroke-linejoin="round" />
<path d="M342.6,1210.8 V1219.6 H332.8" stroke="#3b3f4a" stroke-width="3.2" fill="none" stroke-linecap="round" stroke-linejoin="round" />
<path d="M341.8,1219.6 A15.7,15.7 0 1 0 343.8,1229" stroke="#3b3f4a" stroke-width="3.2" fill="none" stroke-linecap="round" stroke-linejoin="round" />
<path d="M400,1212.6 V1243.2" stroke="#3b3f4a" stroke-width="3.2" fill="none" stroke-linecap="round" stroke-linejoin="round" />
<path d="M384.8,1219.4 V1236.8 L393.2,1228.1 Z M415.2,1219.4 V1236.8 L406.8,1228.1 Z" stroke="#3b3f4a" stroke-width="3.0" fill="none" stroke-linecap="round" stroke-linejoin="round" />
<path d="M456.8,1227.8 H487.4" stroke="#3b3f4a" stroke-width="3.2" fill="none" stroke-linecap="round" stroke-linejoin="round" />
<path d="M463.4,1213 H480.8 L472.1,1221.4 Z M463.4,1242.8 H480.8 L472.1,1234.4 Z" stroke="#3b3f4a" stroke-width="3.0" fill="none" stroke-linecap="round" stroke-linejoin="round" />
<path d="M531.8,1210.8 V1236.4 a3.2,3.2 0 0 0 3.2,3.2 H561.4 M527,1215.6 H553 a3.2,3.2 0 0 1 3.2,3.2 V1245.4" stroke="#c4c7d0" stroke-width="3.2" fill="none" stroke-linecap="round" stroke-linejoin="round" />
<path d="M611,1243.2 H605 a4.4,4.4 0 0 1 -4.4,-4.4 V1217 a4.4,4.4 0 0 1 4.4,-4.4 H626.6 a4.4,4.4 0 0 1 4.4,4.4 V1224" stroke="#c4c7d0" stroke-width="3.2" fill="none" stroke-linecap="round" stroke-linejoin="round" />
<circle cx="621.8" cy="1221.6" r="2.9" stroke="#c4c7d0" stroke-width="2.8" fill="none"/>
<path d="M601,1239 L610.6,1229.4 L615,1233.4" stroke="#c4c7d0" stroke-width="3.2" fill="none" stroke-linecap="round" stroke-linejoin="round" />
<path d="M618.2,1232.6 V1243.6 M614.4,1240 L618.2,1243.8 L622,1240 M630,1244 V1233 M626.2,1236.4 L630,1232.6 L633.8,1236.4 M622.4,1232.6 H624 M624.4,1244 H626" stroke="#c4c7d0" stroke-width="3.0" fill="none" stroke-linecap="round" stroke-linejoin="round" />
<path d="M240.6,1297 a4.4,4.4 0 0 1 4.4,-4.4 H264 L271.6,1300.4 V1319 a4.4,4.4 0 0 1 -4.4,4.4 H245 a4.4,4.4 0 0 1 -4.4,-4.4 Z" stroke="#c4c7d0" stroke-width="3.2" fill="none" stroke-linecap="round" stroke-linejoin="round" />
<path d="M248.2,1293.2 V1298.6 a3,3 0 0 0 3,3 H260.6 a3,3 0 0 0 3,-3 V1293.2 M247.2,1323 V1313.8 a3.4,3.4 0 0 1 3.4,-3.4 H261.6 a3.4,3.4 0 0 1 3.4,3.4 V1323" stroke="#c4c7d0" stroke-width="3.0" fill="none" stroke-linecap="round" stroke-linejoin="round" />
<path d="M313.6,1292 V1324" stroke="#3b3f4a" stroke-width="3.2" fill="none" stroke-linecap="round" stroke-linejoin="round" />
<path d="M321.2,1296.2 H345.4 V1303.4 H321.2 Z M321.2,1312.6 H339.8 V1320 H321.2 Z" stroke="#3b3f4a" stroke-width="3.0" fill="none" stroke-linecap="round" stroke-linejoin="round" />
<path d="M363.09999999999997,1305.2 L369.9,1311.6000000000001 L376.7,1305.2" stroke="#3b3f4a" stroke-width="2.2" fill="none" stroke-linecap="round" stroke-linejoin="round" />
<path d="M417.8,1294.6 V1321.6 M450,1294.6 V1321.6 M419,1308.6 H428 M440,1308.6 H449" stroke="#c4c7d0" stroke-width="3.0" fill="none" stroke-linecap="round" stroke-linejoin="round" />
<path d="M428.8,1303.8 H439.4 V1313.6 H428.8 Z" stroke="#c4c7d0" stroke-width="2.8" fill="none" stroke-linecap="round" stroke-linejoin="round" />
<path d="M467.2,1305.2 L474,1311.6000000000001 L480.8,1305.2" stroke="#c4c7d0" stroke-width="2.2" fill="none" stroke-linecap="round" stroke-linejoin="round" />
<path d="M261.8,1363.4 V1372 H253" stroke="#c4c7d0" stroke-width="3.0" fill="none" stroke-linecap="round" stroke-linejoin="round" />
<path d="M261,1371.6 A15.7,15.7 0 1 0 263.4,1381" stroke="#c4c7d0" stroke-width="3.0" fill="none" stroke-linecap="round" stroke-linejoin="round" />
<circle cx="247.9" cy="1379.8" r="4.3" stroke="#c4c7d0" stroke-width="2.8" fill="none"/>
<path d="M389.2,1372.3 L394,1367.7 L398.8,1372.3" stroke="#d2d4da" stroke-width="2.0" fill="none" stroke-linecap="round" stroke-linejoin="round" />
<path d="M389.2,1389.3 L394,1393.8999999999999 L398.8,1389.3" stroke="#d2d4da" stroke-width="2.0" fill="none" stroke-linecap="round" stroke-linejoin="round" />
<path d="M235.3,1484.1999999999998 L240,1489.0 L244.7,1484.1999999999998" stroke="#8a8d96" stroke-width="2.0" fill="none" stroke-linecap="round" stroke-linejoin="round" />
<path d="M230.4,1545.6 H253.6 M230.4,1557.8 H253.6 M230.4,1570 H239.6 M266.2,1552.6 L261.4,1558 L266.2,1563.4" stroke="#3b3f4a" stroke-width="3.2" fill="none" stroke-linecap="round" stroke-linejoin="round" />
<path d="M381.09999999999997,1549.5 L385.9,1544.9 L390.7,1549.5" stroke="#4b4f5a" stroke-width="2.0" fill="none" stroke-linecap="round" stroke-linejoin="round" />
<path d="M381.09999999999997,1566.8000000000002 L385.9,1571.4 L390.7,1566.8000000000002" stroke="#4b4f5a" stroke-width="2.0" fill="none" stroke-linecap="round" stroke-linejoin="round" />
<path d="M467.2,1545.6 H489.6 M467.2,1557.8 H489.6 M467.2,1570 H473.6 M453.8,1552.6 L458.6,1558 L453.8,1563.4" stroke="#3b3f4a" stroke-width="3.2" fill="none" stroke-linecap="round" stroke-linejoin="round" />
<path d="M605.1,1549.5 L609.9,1544.9 L614.6999999999999,1549.5" stroke="#4b4f5a" stroke-width="2.0" fill="none" stroke-linecap="round" stroke-linejoin="round" />
<path d="M605.1,1566.8000000000002 L609.9,1571.4 L614.6999999999999,1566.8000000000002" stroke="#4b4f5a" stroke-width="2.0" fill="none" stroke-linecap="round" stroke-linejoin="round" />
<clipPath id="ppc"><rect x="176" y="1600" width="504" height="87"/></clipPath>
<path d="M601.4,1671.4 L608.1,1678.4 L614.8,1671.4" stroke="#4b4f5a" stroke-width="2.3" fill="none" stroke-linecap="round" stroke-linejoin="round" />
<defs><radialGradient id="aib" cx="0.5" cy="0.5" r="0.5"><stop offset="0" stop-color="#e9e4fb"/><stop offset="0.8" stop-color="#e6e2fa"/><stop offset="1" stop-color="#e8e6f9"/></radialGradient>
    <linearGradient id="aig" x1="0" y1="0" x2="1" y2="0.4"><stop offset="0" stop-color="#2f6df2"/><stop offset="0.6" stop-color="#7b5cf0"/><stop offset="1" stop-color="#c47af3"/></linearGradient></defs>
    <circle cx="2839.8" cy="126" r="20" fill="url(#aib)"/>
    <rect x="2824" y="116.4" width="31.6" height="19.6" rx="9.8" fill="url(#aig)"/>
    <rect x="2827.4" y="118.2" width="24.8" height="15.6" rx="7.8" fill="#05060a"/>
    <rect x="2834.2" y="122.6" width="3" height="6.6" rx="1.4" fill="#fff"/><rect x="2842.6" y="122.6" width="3" height="6.6" rx="1.4" fill="#fff"/>
<defs><linearGradient id="fbg" x1="0.3" y1="0" x2="0.6" y2="1"><stop offset="0" stop-color="#b04df0"/><stop offset="0.5" stop-color="#6a5cf6"/><stop offset="1" stop-color="#2f63f5"/></linearGradient></defs>
    <circle cx="2716" cy="246" r="30.6" fill="#f9fafd" stroke="#c5c8d4" stroke-width="2"/>
    <rect x="2698" y="237.4" width="16" height="24.8" rx="4" fill="#d6d8f7"/>
    <path d="M2707.2,234 a4.6,4.6 0 0 1 5,-4.6 L2729.4,231.6 a5,5 0 0 1 4.6,5 V257.6 a5,5 0 0 1 -5,5 H2712.2 a5,5 0 0 1 -5,-5 Z" fill="url(#fbg)"/>
    <rect x="2711.8" y="238" width="18.4" height="2.8" rx="1.4" fill="#fff"/>
    <path d="M2714.6,245.6 q0.5,3 3.4,3.4 q-2.9,0.5 -3.4,3.4 q-0.5,-2.9 -3.4,-3.4 q2.9,-0.4 3.4,-3.4 z" fill="#fff"/>
<path d="M2826.6,188.6 H2853.6 V201.2 H2826.6 Z M2826.6,210.8 H2853.6 V223.4 H2826.6 Z" stroke="#3b3f4a" stroke-width="3.2" fill="none" stroke-linecap="round" stroke-linejoin="round" />
<path d="M2828.4,303 V271.6 a3.2,3.2 0 0 1 3.2,-3.2 H2848.6 a3.2,3.2 0 0 1 3.2,3.2 V303 L2840.1,292.4 Z" stroke="#3b3f4a" stroke-width="3.2" fill="none" stroke-linecap="round" stroke-linejoin="round" />
<path d="M2830.4,383.4 V374.8 H2826.8 a4.4,4.4 0 0 1 -4.4,-4.4 V357 a4.4,4.4 0 0 1 4.4,-4.4 H2853.2 a4.4,4.4 0 0 1 4.4,4.4 V370.4 a4.4,4.4 0 0 1 -4.4,4.4 H2842.6 Z" stroke="#3b3f4a" stroke-width="3.2" fill="none" stroke-linecap="round" stroke-linejoin="round" />
<rect x="2825" y="431" width="30.4" height="30.4" rx="4.6" stroke="#3b3f4a" stroke-width="3.2" fill="none"/>
<circle cx="2832.8" cy="438.9" r="2.7" stroke="#3b3f4a" stroke-width="2.6" fill="none"/><circle cx="2832.8" cy="453" r="2.7" stroke="#3b3f4a" stroke-width="2.6" fill="none"/>
<path d="M2841.6,438.9 H2850.4 M2841.6,453 H2850.4" stroke="#3b3f4a" stroke-width="3.0" fill="none" stroke-linecap="round" stroke-linejoin="round" />
<path d="M2828.4,540 V520.4 a11.7,11.7 0 0 1 23.4,0 V534.6 a7.4,8.6 0 0 1 -14.8,0 V522.6 a3.7,4.4 0 0 1 7.4,0 V533.6" stroke="#3b3f4a" stroke-width="3.2" fill="none" stroke-linecap="round" stroke-linejoin="round" />
<circle cx="2837" cy="603.2" r="13.2" stroke="#3b3f4a" stroke-width="3.2" fill="none"/>
<path d="M2846.8,613.2 L2856,622.4" stroke="#3b3f4a" stroke-width="3.2" fill="none" stroke-linecap="round" stroke-linejoin="round" />
<path d="M2840,670.4 L2855.6,679 L2840,687.6 L2824.6,679 Z" stroke="#3b3f4a" stroke-width="3.2" fill="none" stroke-linecap="round" stroke-linejoin="round" />
<path d="M2824.8,686.2 L2840,694.6 L2855.4,686.2 M2824.8,693 L2840,701.4 L2855.4,693" stroke="#3b3f4a" stroke-width="3.2" fill="none" stroke-linecap="round" stroke-linejoin="round" />
<path d="M2825.2,775.6 L2835.8,751.6 a6,6 0 0 1 8.2,-3.2 a6,6 0 0 1 3.4,7.6 L2837.6,778.6 L2826.2,786.2 Z" stroke="#3b3f4a" stroke-width="3.2" fill="none" stroke-linecap="round" stroke-linejoin="round" />
<path d="M2846.6,759.8 a3.4,3.4 0 0 1 1.6,4.4 L2846,769.4" stroke="#3b3f4a" stroke-width="3.0" fill="none" stroke-linecap="round" stroke-linejoin="round" />
<path d="M2838.2,786.4 C2842,785.4 2846.6,781.8 2849.4,781.4 C2852.4,781 2851.6,785.2 2854.4,785.6 C2856.4,785.8 2858.4,784.4 2860,783.2" stroke="#3b3f4a" stroke-width="3.0" fill="none" stroke-linecap="round" stroke-linejoin="round" />
<path d="M2826.2,1165.4 L2840,1151.0 L2853.8,1165.4" stroke="#bbbec7" stroke-width="3.0" fill="none" stroke-linecap="round" stroke-linejoin="round" />
<path d="M2826.2,1232.8 L2840,1247.2 L2853.8,1232.8" stroke="#bbbec7" stroke-width="3.0" fill="none" stroke-linecap="round" stroke-linejoin="round" />
<path d="M2829,1304 Q2828.4,1301.2 2831.2,1302.4 L2853.8,1321.4 Q2855.8,1323.4 2853,1324 L2842.8,1326.4 L2836.6,1335.2 Q2834.8,1337.4 2833.8,1334.6 Z" stroke="#3b3f4a" stroke-width="3.2" fill="none" stroke-linecap="round" stroke-linejoin="round" />
<path d="M2860.4,1342.8 H2872 V1331.4 Z" fill="#3b3f4a"/>
<rect x="2822.4" y="1385.4" width="35.2" height="27.4" rx="4.6" stroke="#3b3f4a" stroke-width="3.2" fill="none"/>
<path d="M2860.4,1422.8 H2872 V1411.4 Z" fill="#3b3f4a"/>
<circle cx="2837" cy="1556.2" r="13.2" stroke="#3b3f4a" stroke-width="3.2" fill="none"/>
<path d="M2846.8,1566.2 L2856,1575.4" stroke="#3b3f4a" stroke-width="3.2" fill="none" stroke-linecap="round" stroke-linejoin="round" />
<path d="M2830.6,1556.2 H2843.4 M2837,1549.8 V1562.6000000000001" stroke="#3b3f4a" stroke-width="3.2" fill="none" stroke-linecap="round" stroke-linejoin="round" />
<circle cx="2837" cy="1636.2" r="13.2" stroke="#3b3f4a" stroke-width="3.2" fill="none"/>
<path d="M2846.8,1646.2 L2856,1655.4" stroke="#3b3f4a" stroke-width="3.2" fill="none" stroke-linecap="round" stroke-linejoin="round" />
<path d="M2830.6,1636.2 H2843.4" stroke="#3b3f4a" stroke-width="3.2" fill="none" stroke-linecap="round" stroke-linejoin="round" />
<defs>
    <linearGradient id="win" x1="0" y1="0" x2="1" y2="1"><stop offset="0" stop-color="#71c6f7"/><stop offset="0.5" stop-color="#3f93e4"/><stop offset="1" stop-color="#2a6fd0"/></linearGradient>
    <linearGradient id="fld" x1="0" y1="0" x2="0.4" y2="1"><stop offset="0" stop-color="#fcd869"/><stop offset="1" stop-color="#f5b83a"/></linearGradient>
    <linearGradient id="fldb" x1="0" y1="0" x2="0" y2="1"><stop offset="0" stop-color="#4a93e4"/><stop offset="1" stop-color="#2b6dc4"/></linearGradient>
    <linearGradient id="edg1" x1="0" y1="0" x2="1" y2="1"><stop offset="0" stop-color="#3a8be0"/><stop offset="1" stop-color="#1e4fa8"/></linearGradient>
    <linearGradient id="edg2" x1="0" y1="0.2" x2="1" y2="0.6"><stop offset="0" stop-color="#45a5e6"/><stop offset="0.55" stop-color="#53c0c0"/><stop offset="1" stop-color="#7fdc6e"/></linearGradient>
    <linearGradient id="sto" x1="0" y1="0" x2="0.6" y2="1"><stop offset="0" stop-color="#2a5ca8"/><stop offset="1" stop-color="#1e3768"/></linearGradient>
    <linearGradient id="wd1" x1="0" y1="0" x2="1" y2="0.3"><stop offset="0" stop-color="#5fd0fa"/><stop offset="0.7" stop-color="#7ac8fa"/><stop offset="1" stop-color="#b09af5"/></linearGradient>
    <linearGradient id="wd2" x1="0" y1="0" x2="1" y2="0.5"><stop offset="0" stop-color="#3f9cf0"/><stop offset="1" stop-color="#5a7ff0"/></linearGradient>
    <linearGradient id="wd3" x1="0" y1="0" x2="1" y2="1"><stop offset="0" stop-color="#2453e0"/><stop offset="1" stop-color="#1a3dc0"/></linearGradient>
    <linearGradient id="wdb" x1="0" y1="0" x2="1" y2="1"><stop offset="0" stop-color="#2d5fe0"/><stop offset="1" stop-color="#1530a8"/></linearGradient>
    <linearGradient id="xl1" x1="0" y1="0" x2="1" y2="1"><stop offset="0" stop-color="#a6e070"/><stop offset="1" stop-color="#6cc04a"/></linearGradient>
    <linearGradient id="xl2" x1="0" y1="0" x2="1" y2="1"><stop offset="0" stop-color="#3f8f3a"/><stop offset="1" stop-color="#2f7030"/></linearGradient>
    <linearGradient id="xlb" x1="0" y1="0" x2="1" y2="1"><stop offset="0" stop-color="#2f8a50"/><stop offset="1" stop-color="#1e6838"/></linearGradient>
    <linearGradient id="dd" x1="0" y1="0" x2="0.8" y2="1"><stop offset="0" stop-color="#5eaaf8"/><stop offset="1" stop-color="#2f6df0"/></linearGradient>
    <linearGradient id="mm" x1="0" y1="0" x2="0.8" y2="1"><stop offset="0" stop-color="#72e078"/><stop offset="1" stop-color="#3f9a8c"/></linearGradient>
    <linearGradient id="pe" x1="0" y1="0" x2="0" y2="1"><stop offset="0" stop-color="#2a66f4"/><stop offset="1" stop-color="#2558ea"/></linearGradient>
    </defs>
<g><clipPath id="wcl"><rect x="41.2" y="1730" width="21.8" height="21.8" rx="2.2"/><rect x="65.2" y="1730" width="21.8" height="21.8" rx="2.2"/><rect x="41.2" y="1754" width="21.8" height="21.8" rx="2.2"/><rect x="65.2" y="1754" width="21.8" height="21.8" rx="2.2"/></clipPath><rect x="41" y="1729.8" width="46.2" height="46.2" fill="url(#win)" clip-path="url(#wcl)"/></g>
<path d="M130,1735.6 a3,3 0 0 1 3,-3 H145 q2,0 3.2,1.6 l1.6,2.2 H175 a3,3 0 0 1 3,3 V1742 H130 Z" fill="#dfa42c"/>
    <rect x="130" y="1736.6" width="48" height="37.4" rx="3" fill="url(#fld)"/>
    <path d="M137.8,1774 V1766 a6,6 0 0 1 6,-6 H163.6 a6,6 0 0 1 6,6 V1774 Z" fill="url(#fldb)"/>
    <rect x="144.4" y="1766" width="18.6" height="1.8" rx="0.9" fill="#235aa8"/>
<circle cx="242" cy="1751.6" r="24" fill="url(#edg1)"/>
    <path d="M219.4,1744 C224,1730 238,1725.6 248,1728.2 C260,1731 266.6,1741 265.8,1750.4 C265,1757.6 258,1760.8 251.6,1759.6 C248.6,1759 247.6,1757 249.4,1754.6 C252.4,1750 249,1742.6 241,1742 C230,1741.4 222,1748.6 219.6,1757 C218.2,1753 218.2,1748 219.4,1744 Z" fill="url(#edg2)"/>
    <path d="M236.4,1746.6 C231,1750.6 229.4,1759 233.4,1765 C238,1772 249,1773.6 257.4,1768.4 C260,1766.6 262,1764.4 262.6,1762.8 C258,1765.4 250,1765.4 245.4,1761.4 C241.6,1758 241.4,1752.4 244.6,1749.4 C242.6,1746 239,1745.4 236.4,1746.6 Z" fill="#1c4a9c" opacity="0.9"/>
    <ellipse cx="245" cy="1752.8" rx="4.6" ry="5.4" fill="#e6edf7"/>
<path d="M317.6,1735.4 V1731.6 a3.4,3.4 0 0 1 3.4,-3.4 H339 a3.4,3.4 0 0 1 3.4,3.4 V1735.4" stroke="#55b0f0" stroke-width="3.4" fill="none"/>
    <path d="M307,1738 a3,3 0 0 1 3,-3 H350 a3,3 0 0 1 3,3 V1768 a8,8 0 0 1 -8,8 H315 a8,8 0 0 1 -8,-8 Z" fill="url(#sto)"/>
    <rect x="320.2" y="1745.2" width="9" height="9" fill="#ea5a2e"/><rect x="331.2" y="1745.2" width="9" height="9" fill="#86bf32"/>
    <rect x="320.2" y="1756.2" width="9" height="9" fill="#45a6ec"/><rect x="331.2" y="1756.2" width="9" height="9" fill="#f8be38"/>
<clipPath id="ycl"><path d="M418,1728 C436,1728 442,1734 442,1752 C442,1770 436,1776 418,1776 C400,1776 394.4,1770 394.4,1752 C394.4,1734 400,1728 418,1728 Z"/></clipPath>
    <g clip-path="url(#ycl)"><rect x="394" y="1728" width="48" height="25" fill="#d8664f"/><rect x="394" y="1752.6" width="48" height="24" fill="#c9563f"/></g>
    <path d="M405.2,1737.6 H413.2 L418.4,1747.4 L423.8,1737.6 H432 L422.4,1753.6 V1767.2 H414.4 V1753.6 Z" fill="#fff"/>
<rect x="488" y="1729.4" width="36" height="22" rx="4.6" fill="url(#wd1)"/>
    <rect x="488" y="1744.4" width="36" height="18" rx="4" fill="url(#wd2)"/>
    <path d="M488,1758 H524 V1770 a4,4 0 0 1 -4,4 H492 a4,4 0 0 1 -4,-4 Z" fill="url(#wd3)"/>
    <rect x="482" y="1750.4" width="19.2" height="19.2" rx="4" fill="url(#wdb)"/>
<path d="M576.4,1733.6 a4,4 0 0 1 4,-4 H594 V1751 H576.4 Z" fill="#8fd460"/>
    <rect x="594" y="1729.6" width="17.8" height="14.6" rx="3.6" fill="url(#xl1)"/>
    <path d="M576.4,1750 a6,6 0 0 1 6,-6 H594 V1744 H611.8 V1770 a4,4 0 0 1 -4,4 H580.4 a4,4 0 0 1 -4,-4 Z" fill="url(#xl2)"/>
    <rect x="570" y="1750.4" width="19.2" height="19.2" rx="4" fill="url(#xlb)"/>
<rect x="658" y="1728" width="48" height="48" rx="10.6" fill="url(#dd)"/>
    <path d="M671.6,1739.8 H682.6 a12,12.2 0 0 1 0,24.4 H671.6" stroke="#fff" stroke-width="4" fill="none" stroke-linecap="round"/>
    <rect x="670" y="1749.4" width="14.6" height="4.6" rx="2.3" fill="#c4ddfb"/>
<clipPath id="mcl"><rect x="746" y="1728" width="48" height="48" rx="10.6"/></clipPath>
    <rect x="746" y="1728" width="48" height="48" rx="10.6" fill="url(#mm)"/>
    <rect x="746" y="1765" width="48" height="11" fill="#5db394" opacity="0.75" clip-path="url(#mcl)"/>
    <path d="M761.4,1754.6 V1737.4 L779.6,1754.6 V1737.4 M761.4,1754.6 L770.4,1746 M779.6,1737.4 L770.6,1746" stroke="#fff" stroke-width="3.2" fill="none" stroke-linejoin="round" stroke-linecap="round"/>
    <path d="M765.2,1767.6 l2.4,3 l2.6,-3 l2.4,3 l2.6,-3" stroke="#fff" stroke-width="1.9" fill="none" stroke-linejoin="round" stroke-linecap="round"/>
<clipPath id="pcl"><rect x="834" y="1728" width="48" height="48" rx="11"/></clipPath>
    <rect x="834" y="1728" width="48" height="48" rx="11" fill="url(#pe)"/>
    <rect x="834" y="1764.6" width="48" height="11.4" fill="#3f7af5" opacity="0.8" clip-path="url(#pcl)"/>
    <path d="M849,1736 H867.2 V1745.4 H857.8 V1755.6 H849 Z" fill="#fff"/>
    <rect x="849" y="1746.6" width="8.8" height="9" fill="#e8eefc"/>
    <path d="M853.2,1767.6 l2.4,3 l2.6,-3 l2.4,3 l2.6,-3" stroke="#fff" stroke-width="1.9" fill="none" stroke-linejoin="round" stroke-linecap="round"/>
<ellipse cx="946" cy="1741" rx="16" ry="11.6" fill="#f3ece2"/>
    <ellipse cx="938.6" cy="1739" rx="6.4" ry="6.8" fill="#fff"/><ellipse cx="953.4" cy="1739" rx="6.4" ry="6.8" fill="#fff"/>
    <circle cx="941.4" cy="1738.4" r="3" fill="#1b1b1f"/><circle cx="950.6" cy="1738.4" r="3" fill="#1b1b1f"/>
    <rect x="927.6" y="1768" width="37" height="5.6" rx="2.6" fill="#f2b23a"/>
    <rect x="930" y="1741.6" width="31.6" height="30" rx="3.4" fill="#d93a35"/>
    <circle cx="929.8" cy="1755.6" r="4.6" fill="#f1e3cf"/><circle cx="962.4" cy="1755.6" r="4.6" fill="#f1e3cf"/>
    <path d="M935.6,1757.6 H956 M935.6,1762.4 H951.4 M935.6,1767 H956" stroke="#fff" stroke-width="1.7" fill="none"/>
<circle cx="1033.9" cy="1751.8" r="21.4" fill="none" stroke="#c8382d" stroke-width="3.7"/><path d="M1021.2,1739.1 L1032.8,1739.1 L1032.8,1742.7 L1024.8,1742.7 L1024.8,1746.3 L1031.8,1746.3 L1031.8,1756.9 L1024.8,1756.9 L1024.8,1761.1 L1032.8,1761.1 L1032.8,1764.7 L1021.2,1764.7 L1021.2,1753.5 L1028.4,1753.5 L1028.4,1749.7 L1021.2,1749.7 Z M1046.8,1739.1 L1035.2,1739.1 L1035.2,1742.7 L1043.2,1742.7 L1043.2,1746.3 L1036.2,1746.3 L1036.2,1756.9 L1043.2,1756.9 L1043.2,1761.1 L1035.2,1761.1 L1035.2,1764.7 L1046.8,1764.7 L1046.8,1753.5 L1039.6,1753.5 L1039.6,1749.7 L1046.8,1749.7 Z" fill="#c8382d"/>
<path d="M2429.6,1751.6 a14.6,14.6 0 0 1 27,-9.4 M2457.4,1736 V1743.4 H2450 M2443.4,1767.2 a14.4,14.4 0 0 1 -11.6,-4.8 M2430.8,1768.2 V1761.6 H2437.4" stroke="#15171c" stroke-width="2.0" fill="none" stroke-linecap="butt" stroke-linejoin="miter" />
<circle cx="2452" cy="1759.8" r="8.2" fill="#f0a030"/>
<path d="M2581,1746 V1737.2 H2559.6 a2.4,2.4 0 0 0 -2.4,2.4 V1757.6 a2.4,2.4 0 0 0 2.4,2.4 H2576" stroke="#15171c" stroke-width="2.0" fill="none" stroke-linecap="butt" stroke-linejoin="round" />
<path d="M2566,1760.2 V1766.6 M2573.4,1760.2 V1766.6 M2562.4,1766.8 H2579.6" stroke="#15171c" stroke-width="2.0" fill="none" stroke-linecap="butt" stroke-linejoin="round" />
<rect x="2579.6" y="1737" width="7.4" height="11.6" rx="2" fill="none" stroke="#15171c" stroke-width="2"/>
<path d="M2581.4,1741.4 H2585.2 M2583.3,1748.8 V1767.6" stroke="#15171c" stroke-width="2.0" fill="none" stroke-linecap="butt" stroke-linejoin="round" />
<path d="M2605.4,1747.4 H2610.4 L2617,1740.8 V1763.2 L2610.4,1756.6 H2605.4 Z" stroke="#15171c" stroke-width="2.0" fill="none" stroke-linecap="round" stroke-linejoin="round" />
<path d="M2621,1746.4 a8,8 0 0 1 0,11.2 M2624.6,1742.6 a13,13 0 0 1 0,18.8" stroke="#15171c" stroke-width="2.0" fill="none" stroke-linecap="round" stroke-linejoin="round" />
<path d="M2628.6,1738.8 a18.4,18.4 0 0 1 0,26.4" stroke="#c2c6cf" stroke-width="2.0" fill="none" stroke-linecap="round" stroke-linejoin="round" />
<rect x="2653" y="1743" width="27.4" height="17.6" rx="4.2" fill="none" stroke="#15171c" stroke-width="2.2"/>
<rect x="2656.4" y="1746.4" width="14" height="10.8" rx="1.6" fill="#15171c"/>
<path d="M2681.4,1748.4 h1 a2,2 0 0 1 2,2 v2.8 a2,2 0 0 1 -2,2 h-1 z" fill="#15171c"/>
</svg>

<div style="position:absolute;left:1562.67px;top:554.45px;font-size:63.22px;line-height:1;font-weight:700;color:#e8442b;white-space:pre;font-family:'Liberation Sans','Noto Sans CJK KR',sans-serif;letter-spacing:0.81px;">곡선 형태로</div>
<div style="position:absolute;left:1503.63px;top:636.19px;font-size:64.14px;line-height:1;font-weight:700;color:#e8442b;white-space:pre;font-family:'Liberation Sans','Noto Sans CJK KR',sans-serif;letter-spacing:-0.01px;">자연스럽게 배치</div>
<div style="position:absolute;left:177.98px;top:28.24px;font-size:25.48px;line-height:1;font-weight:400;color:#20232b;white-space:pre;font-family:'Liberation Sans','Noto Sans CJK KR',sans-serif;letter-spacing:-0.35px;">제목  없음_1.pdf *</div>
<div style="position:absolute;left:2114.50px;top:29.44px;font-size:24.03px;line-height:1;font-weight:500;color:#e05f48;white-space:pre;font-family:'Liberation Sans','Noto Sans CJK KR',sans-serif;letter-spacing:1.09px;-webkit-text-stroke:0.8px #e05f48;">저렴한 가격의 7일 AI 체험!</div>
<div style="position:absolute;left:415.00px;top:114.07px;font-size:28.90px;line-height:1;font-weight:400;color:#1b1e25;white-space:pre;font-family:'Liberation Sans','Noto Sans CJK KR',sans-serif;letter-spacing:1.48px;">텍스트 편집</div>
<div style="position:absolute;left:677.10px;top:114.07px;font-size:28.90px;line-height:1;font-weight:400;color:#1b1e25;white-space:pre;font-family:'Liberation Sans','Noto Sans CJK KR',sans-serif;letter-spacing:1.42px;">텍스트 추가</div>
<div style="position:absolute;left:903.11px;top:114.07px;font-size:28.90px;line-height:1;font-weight:400;color:#1b1e25;white-space:pre;font-family:'Liberation Sans','Noto Sans CJK KR',sans-serif;letter-spacing:1.16px;">링크</div>
<div style="position:absolute;left:1034.69px;top:114.07px;font-size:28.90px;line-height:1;font-weight:400;color:#1b1e25;white-space:pre;font-family:'Liberation Sans','Noto Sans CJK KR',sans-serif;letter-spacing:1.65px;">이미지</div>
<div style="position:absolute;left:1230.65px;top:114.07px;font-size:28.90px;line-height:1;font-weight:400;color:#1b1e25;white-space:pre;font-family:'Liberation Sans','Noto Sans CJK KR',sans-serif;letter-spacing:1.58px;">워터마크</div>
<div style="position:absolute;left:1446.69px;top:114.07px;font-size:28.90px;line-height:1;font-weight:400;color:#1b1e25;white-space:pre;font-family:'Liberation Sans','Noto Sans CJK KR',sans-serif;letter-spacing:1.71px;">배경화면</div>
<div style="position:absolute;left:1662.25px;top:114.07px;font-size:28.90px;line-height:1;font-weight:400;color:#1b1e25;white-space:pre;font-family:'Liberation Sans','Noto Sans CJK KR',sans-serif;letter-spacing:1.88px;">머리글&amp;바닥글</div>
<div style="position:absolute;left:1957.04px;top:114.07px;font-size:28.90px;line-height:1;font-weight:400;color:#1b1e25;white-space:pre;font-family:'Liberation Sans','Noto Sans CJK KR',sans-serif;letter-spacing:1.80px;">페이지 번호</div>
<div style="position:absolute;left:2371.94px;top:115.41px;font-size:22.73px;line-height:1;font-weight:400;color:#8b8e97;white-space:pre;font-family:'Liberation Sans','Noto Sans CJK KR',sans-serif;letter-spacing:2.37px;">검색 툴</div>
<div style="position:absolute;left:76.68px;top:173.07px;font-size:23.30px;line-height:1;font-weight:400;color:#1b1e25;white-space:pre;font-family:'Liberation Sans','Noto Sans CJK KR',sans-serif;letter-spacing:1.90px;">홈</div>
<div style="position:absolute;left:64.65px;top:308.23px;font-size:23.30px;line-height:1;font-weight:400;color:#1b1e25;white-space:pre;font-family:'Liberation Sans','Noto Sans CJK KR',sans-serif;letter-spacing:1.90px;">주석</div>
<div style="position:absolute;left:65.05px;top:444.05px;font-size:23.30px;line-height:1;font-weight:400;color:#1b1e25;white-space:pre;font-family:'Liberation Sans','Noto Sans CJK KR',sans-serif;letter-spacing:1.90px;">편집</div>
<div style="position:absolute;left:64.53px;top:580.97px;font-size:23.30px;line-height:1;font-weight:400;color:#1b1e25;white-space:pre;font-family:'Liberation Sans','Noto Sans CJK KR',sans-serif;letter-spacing:1.90px;">변환</div>
<div style="position:absolute;left:64.65px;top:716.63px;font-size:23.30px;line-height:1;font-weight:400;color:#1b1e25;white-space:pre;font-family:'Liberation Sans','Noto Sans CJK KR',sans-serif;letter-spacing:1.90px;">보기</div>
<div style="position:absolute;left:64.53px;top:853.43px;font-size:23.30px;line-height:1;font-weight:400;color:#1b1e25;white-space:pre;font-family:'Liberation Sans','Noto Sans CJK KR',sans-serif;letter-spacing:1.90px;">구성</div>
<div style="position:absolute;left:64.71px;top:989.23px;font-size:23.30px;line-height:1;font-weight:400;color:#1b1e25;white-space:pre;font-family:'Liberation Sans','Noto Sans CJK KR',sans-serif;letter-spacing:1.90px;">도구</div>
<div style="position:absolute;left:64.81px;top:1124.03px;font-size:23.30px;line-height:1;font-weight:400;color:#1b1e25;white-space:pre;font-family:'Liberation Sans','Noto Sans CJK KR',sans-serif;letter-spacing:1.90px;">양식</div>
<div style="position:absolute;left:64.10px;top:1261.57px;font-size:23.30px;line-height:1;font-weight:400;color:#1b1e25;white-space:pre;font-family:'Liberation Sans','Noto Sans CJK KR',sans-serif;letter-spacing:1.90px;">보안</div>
<div style="position:absolute;left:76.85px;top:1396.61px;font-size:23.82px;line-height:1;font-weight:400;color:#1b1e25;white-space:pre;font-family:'Liberation Sans','Noto Sans CJK KR',sans-serif;letter-spacing:-0.01px;">AI</div>
<div style="position:absolute;left:195.21px;top:208.91px;font-size:28.60px;line-height:1;font-weight:700;color:#1b1e25;white-space:pre;font-family:'Liberation Sans','Noto Sans CJK KR',sans-serif;letter-spacing:3.88px;">속성</div>
<div style="position:absolute;left:231.85px;top:295.88px;font-size:23.10px;line-height:1;font-weight:700;color:#1b1e25;white-space:pre;font-family:'Liberation Sans','Noto Sans CJK KR',sans-serif;letter-spacing:2.60px;">종류</div>
<div style="position:absolute;left:231.54px;top:351.56px;font-size:23.04px;line-height:1;font-weight:400;color:#1b1e25;white-space:pre;font-family:'Liberation Sans','Noto Sans CJK KR',sans-serif;letter-spacing:2.77px;">텍스트</div>
<div style="position:absolute;left:263.45px;top:445.48px;font-size:23.10px;line-height:1;font-weight:700;color:#1b1e25;white-space:pre;font-family:'Liberation Sans','Noto Sans CJK KR',sans-serif;letter-spacing:2.80px;">폰트</div>
<div style="position:absolute;left:229.65px;top:515.61px;font-size:27.30px;line-height:1;font-weight:400;color:#1b1e25;white-space:pre;font-family:'Liberation Sans','Noto Sans CJK KR',sans-serif;letter-spacing:-1.29px;">Segoe UI</div>
<div style="position:absolute;left:231.05px;top:605.21px;font-size:24.93px;line-height:1;font-weight:400;color:#1b1e25;white-space:pre;font-family:'Liberation Sans','Noto Sans CJK KR',sans-serif;letter-spacing:0.44px;">48</div>
<div style="position:absolute;left:242.68px;top:674.01px;font-size:44.99px;line-height:1;font-weight:700;color:#3b3f4a;white-space:pre;font-family:'Liberation Sans','Noto Sans CJK KR',sans-serif;transform:scaleX(0.8268);transform-origin:0 0;-webkit-text-stroke:1.6px #3b3f4a;">B</div>
<div style="position:absolute;left:552.06px;top:673.80px;font-size:20.00px;line-height:1;font-weight:700;color:#3b3f4a;white-space:pre;font-family:'Liberation Sans','Noto Sans CJK KR',sans-serif;transform:scaleX(0.9658);transform-origin:0 0;">2</div>
<div style="position:absolute;left:623.92px;top:695.91px;font-size:20.57px;line-height:1;font-weight:700;color:#3b3f4a;white-space:pre;font-family:'Liberation Sans','Noto Sans CJK KR',sans-serif;transform:scaleX(0.9155);transform-origin:0 0;">2</div>
<div style="position:absolute;left:263.84px;top:879.53px;font-size:23.10px;line-height:1;font-weight:700;color:#1b1e25;white-space:pre;font-family:'Liberation Sans','Noto Sans CJK KR',sans-serif;letter-spacing:2.80px;">간격</div>
<div style="position:absolute;left:295.91px;top:952.89px;font-size:23.38px;line-height:1;font-weight:400;color:#1b1e25;white-space:pre;font-family:'Liberation Sans','Noto Sans CJK KR',sans-serif;">0</div>
<div style="position:absolute;left:519.91px;top:952.89px;font-size:23.38px;line-height:1;font-weight:400;color:#1b1e25;white-space:pre;font-family:'Liberation Sans','Noto Sans CJK KR',sans-serif;">0</div>
<div style="position:absolute;left:295.91px;top:1033.69px;font-size:23.38px;line-height:1;font-weight:400;color:#1b1e25;white-space:pre;font-family:'Liberation Sans','Noto Sans CJK KR',sans-serif;">0</div>
<div style="position:absolute;left:263.23px;top:1138.33px;font-size:23.10px;line-height:1;font-weight:700;color:#1b1e25;white-space:pre;font-family:'Liberation Sans','Noto Sans CJK KR',sans-serif;letter-spacing:2.80px;">동작</div>
<div style="position:absolute;left:295.99px;top:1370.41px;font-size:23.94px;line-height:1;font-weight:400;color:#c3c5cd;white-space:pre;font-family:'Liberation Sans','Noto Sans CJK KR',sans-serif;letter-spacing:0.22px;">0 °</div>
<div style="position:absolute;left:263.50px;top:1476.33px;font-size:23.10px;line-height:1;font-weight:700;color:#1b1e25;white-space:pre;font-family:'Liberation Sans','Noto Sans CJK KR',sans-serif;letter-spacing:2.80px;">들여쓰기</div>
<div style="position:absolute;left:295.91px;top:1549.09px;font-size:23.38px;line-height:1;font-weight:400;color:#1b1e25;white-space:pre;font-family:'Liberation Sans','Noto Sans CJK KR',sans-serif;">0</div>
<div style="position:absolute;left:519.91px;top:1549.09px;font-size:23.38px;line-height:1;font-weight:400;color:#1b1e25;white-space:pre;font-family:'Liberation Sans','Noto Sans CJK KR',sans-serif;">0</div>
<div style="position:absolute;left:226.82px;top:1619.07px;font-size:23.97px;line-height:1;font-weight:400;color:#3b3f4a;white-space:pre;font-family:'Liberation Sans','Noto Sans CJK KR',sans-serif;letter-spacing:2.87px;">특수</div>
<div style="position:absolute;left:176px;top:1650px;width:504px;height:37px;overflow:hidden"><div style="position:absolute;left:55.68px;top:13.89px;font-size:25.29px;line-height:1;font-weight:400;color:#1b1e25;white-space:pre;font-family:'Liberation Sans','Noto Sans CJK KR',sans-serif;">(없음)</div></div>
<div style="position:absolute;left:2831.48px;top:989.27px;font-size:25.22px;line-height:1;font-weight:400;color:#1b1e25;white-space:pre;font-family:'Liberation Sans','Noto Sans CJK KR',sans-serif;">1</div>
<div style="position:absolute;left:2830.54px;top:1069.13px;font-size:24.49px;line-height:1;font-weight:400;color:#8c8f98;white-space:pre;font-family:'Liberation Sans','Noto Sans CJK KR',sans-serif;">1</div>
<div style="position:absolute;left:2825.93px;top:1388.38px;font-size:22.03px;line-height:1;font-weight:700;color:#3b3f4a;white-space:pre;font-family:'Liberation Sans','Noto Sans CJK KR',sans-serif;transform:scaleX(0.8949);transform-origin:0 0;">1:1</div>
<div style="position:absolute;left:2809.24px;top:1469.18px;font-size:24.79px;line-height:1;font-weight:400;color:#1b1e25;white-space:pre;font-family:'Liberation Sans','Noto Sans CJK KR',sans-serif;transform:scaleX(0.9392);transform-origin:0 0;">100%</div>
<div style="position:absolute;left:485.20px;top:1753.77px;font-size:13.91px;line-height:1;font-weight:700;color:#fff;white-space:pre;font-family:'Liberation Sans','Noto Sans CJK KR',sans-serif;transform:scaleX(0.9642);transform-origin:0 0;">W</div>
<div style="position:absolute;left:574.95px;top:1753.77px;font-size:13.91px;line-height:1;font-weight:700;color:#fff;white-space:pre;font-family:'Liberation Sans','Noto Sans CJK KR',sans-serif;transform:scaleX(1.0570);transform-origin:0 0;">X</div>
<div style="position:absolute;left:932.82px;top:1746.18px;font-size:10.67px;line-height:1;font-weight:700;color:#fff;white-space:pre;font-family:'Liberation Sans','Noto Sans CJK KR',sans-serif;transform:scaleX(1.0044);transform-origin:0 0;">PDF</div>
<div style="position:absolute;left:2496.50px;top:1730.98px;font-size:44.20px;line-height:1;font-weight:300;color:#15171c;white-space:pre;font-family:'Liberation Sans','Noto Sans CJK KR',sans-serif;transform:scaleX(0.8023);transform-origin:0 0;">A</div>
<div style="position:absolute;left:2718.95px;top:1757.11px;font-size:23.55px;line-height:1;font-weight:400;color:#15171c;white-space:pre;font-family:'Liberation Sans','Noto Sans CJK KR',sans-serif;letter-spacing:0.16px;">2025-12-18</div>
<div style="position:absolute;left:0;top:0;width:0;height:0;"><span style="position:absolute;left:2741.67px;top:1726.06px;font-size:20.64px;line-height:1;font-weight:400;color:#15171c;white-space:pre;font-family:'Liberation Sans','Noto Sans CJK KR',sans-serif;transform:scaleX(1.2235);transform-origin:0 0;">오후</span> <span style="position:absolute;left:2797.01px;top:1725.73px;font-size:22.61px;line-height:1;font-weight:400;color:#15171c;white-space:pre;font-family:'Liberation Sans','Noto Sans CJK KR',sans-serif;transform:scaleX(1.0269);transform-origin:0 0;">8:47</span></div>
<svg id="ov2" width="2880" height="1800" viewBox="0 0 2880 1800">
<ellipse cx="1333.4" cy="770.2" rx="50.6" ry="62" fill="none" stroke="#e8442b" stroke-width="5.2"/>
<path d="M1192.6,851.4 L1488.6,756.2 L1540.5,918.8 L1244.5,1013.8 Z" stroke="#4a7fd6" stroke-width="1.1" fill="none" stroke-linecap="round" stroke-linejoin="round" />
<path d="M1281.9,822.4 L1333.8,984.8" stroke="#000" stroke-width="2.4" fill="none" stroke-linecap="butt" stroke-linejoin="round" />
<path d="M1322.1,746.7 L1340.5,803.8" stroke="#4a7fd6" stroke-width="1.1" fill="none" stroke-linecap="round" stroke-linejoin="round" stroke-dasharray="11 9" stroke-dashoffset="-13"/>
<circle cx="1192.6" cy="851.4" r="8.8" fill="#fff" stroke="#4a7fd6" stroke-width="1.1"/>
<circle cx="1488.6" cy="756.2" r="8.8" fill="#fff" stroke="#4a7fd6" stroke-width="1.1"/>
<circle cx="1540.5" cy="918.8" r="8.8" fill="#fff" stroke="#4a7fd6" stroke-width="1.1"/>
<circle cx="1244.5" cy="1013.8" r="8.8" fill="#fff" stroke="#4a7fd6" stroke-width="1.1"/>
<circle cx="1340.5" cy="803.8" r="8.8" fill="#fff" stroke="#4a7fd6" stroke-width="1.1"/>
<circle cx="1514.3" cy="837.6" r="8.8" fill="#fff" stroke="#4a7fd6" stroke-width="1.1"/>
<circle cx="1392.6" cy="966.4" r="8.8" fill="#fff" stroke="#4a7fd6" stroke-width="1.1"/>
<circle cx="1218.6" cy="932.4" r="8.8" fill="#fff" stroke="#4a7fd6" stroke-width="1.1"/>
<circle cx="1322.1" cy="746.7" r="8.8" fill="#fff" stroke="#4a7fd6" stroke-width="1.1"/>
</svg>
</body></html>
